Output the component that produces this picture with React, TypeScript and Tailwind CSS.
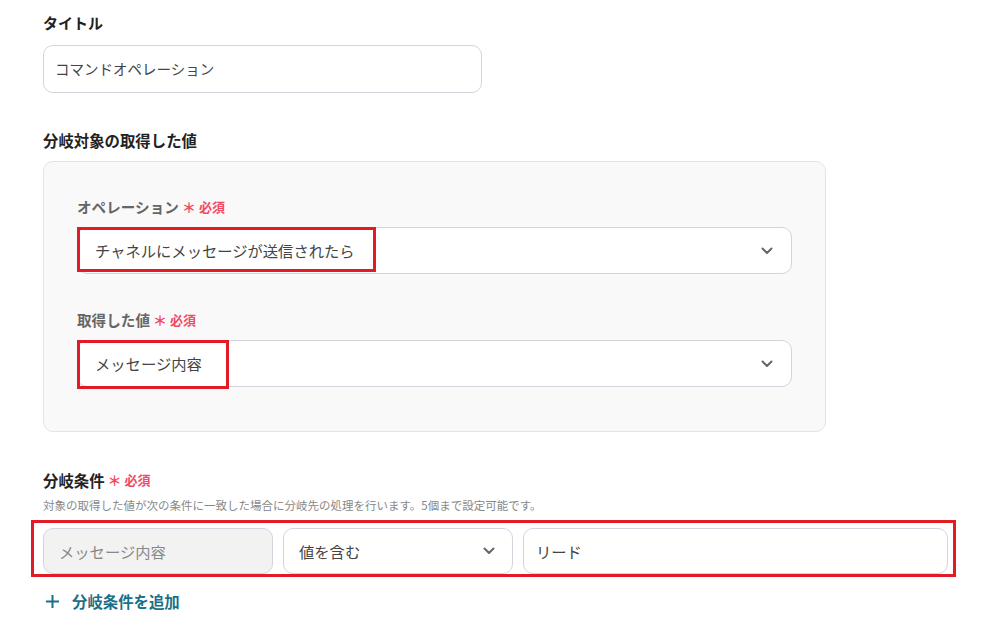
import React from "react";

function Chevron() {
  return (
    <svg width="12" height="8" viewBox="0 0 12 8" fill="none" className="shrink-0">
      <path d="M1.5 1.5L6 6l4.5-4.5" stroke="#666" strokeWidth="2" strokeLinecap="round" strokeLinejoin="round" />
    </svg>
  );
}

function Required() {
  return (
    <span className="ml-[3px] inline-flex items-center text-[#f24a64] text-[13px] font-bold">
      <span className="text-[14px] leading-none mr-[3px]">＊</span>必須
    </span>
  );
}

export default function App() {
  return (
    <div className="min-h-[644px] w-[990px] bg-white font-['Noto_Sans_CJK_JP','Noto_Sans',sans-serif] text-[#333]">
      <div className="w-[948px] pl-[43px] pt-[12px]">
        <div className="text-[15px] font-bold leading-[22px] text-[#222]">タイトル</div>
        <div className="mt-[11px] flex h-[48px] w-[439px] items-center rounded-[10px] border border-gray-300 px-[11px] text-[14.5px] text-[#444]">
          コマンドオペレーション
        </div>

        <div className="mt-[36px] text-[15.4px] font-bold leading-[22px] text-[#222]">分岐対象の取得した値</div>
        <div className="mt-[10px] w-[783px] rounded-[10px] border border-[#e4e4e4] bg-[#f9f9f9] px-[33px] pt-[34px] pb-[44px]">
          <div className="flex items-center text-[14.6px] font-bold leading-[22px] text-[#666]">
            オペレーション
            <Required />
          </div>
          <div className="relative mt-[9px] flex h-[47px] items-center justify-between rounded-[10px] border border-gray-300 bg-white pl-[17px] pr-[18px] text-[15.3px] text-[#444]">
            <span>チャネルにメッセージが送信されたら</span>
            <Chevron />
            <div className="pointer-events-none absolute left-[-1px] top-[-1px] h-[45px] w-[299px] border-[3px] border-[#e21c24]" />
          </div>

          <div className="mt-[35px] flex items-center text-[14.6px] font-bold leading-[22px] text-[#666]">
            取得した値
            <Required />
          </div>
          <div className="relative mt-[9px] flex h-[47px] items-center justify-between rounded-[10px] border border-gray-300 bg-white pl-[17px] pr-[18px] text-[15.3px] text-[#444]">
            <span>メッセージ内容</span>
            <Chevron />
            <div className="pointer-events-none absolute left-[-1px] top-[-1px] h-[49px] w-[152px] border-[3px] border-[#e21c24]" />
          </div>
        </div>

        <div className="mt-[37px] flex items-center text-[15.4px] font-bold leading-[22px] text-[#222]">
          分岐条件
          <Required />
        </div>
        <div className="mt-[6px] text-[11.5px] leading-[16px] text-[#888]">
          対象の取得した値が次の条件に一致した場合に分岐先の処理を行います。5個まで設定可能です。
        </div>
        <div className="relative mt-[15px] flex gap-[10px]">
          <div className="flex h-[46px] w-[230px] items-center rounded-[10px] border border-gray-300 bg-[#f2f2f2] px-[15px] text-[15.3px] text-[#888]">
            メッセージ内容
          </div>
          <div className="flex h-[46px] w-[230px] items-center justify-between rounded-[10px] border border-gray-300 bg-white pl-[15px] pr-[17px] text-[15.3px] text-[#444]">
            <span>値を含む</span>
            <Chevron />
          </div>
          <div className="flex h-[46px] flex-1 items-center rounded-[10px] border border-gray-300 bg-white px-[12px] text-[15.3px] text-[#444]">
            リード
          </div>
          <div className="pointer-events-none absolute left-[-12px] right-[-8px] top-[-8px] bottom-[-3px] border-[3px] border-[#e21c24]" />
        </div>

        <div className="mt-[16px] flex items-center gap-[12px] pl-[2px] text-[15.4px] font-bold leading-[22px] text-[#1b6f88]">
          <svg width="15" height="15" viewBox="0 0 15 15" fill="none">
            <path d="M7.5 1v13M1 7.5h13" stroke="#1b6f88" strokeWidth="2" />
          </svg>
          分岐条件を追加
        </div>
      </div>
    </div>
  );
}
